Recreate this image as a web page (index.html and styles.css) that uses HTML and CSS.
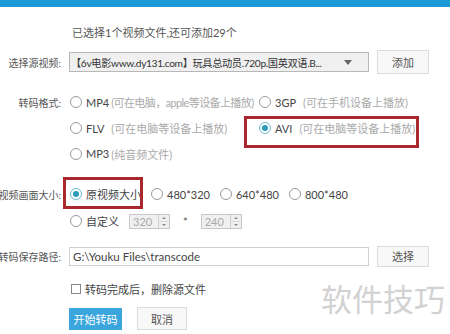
FILE: index.html
```html
<!DOCTYPE html>
<html>
<head>
    <title>视频转码</title>
    <link rel="stylesheet" href="styles.css">
</head>
<body>
    <div class="topbar"></div>

    <div class="info">已选择1个视频文件,还可添加29个</div>

    <div class="row row-source">
        <span class="label">选择源视频:</span>
        <div class="select">
            <span class="select-text">【6v电影www.dy131.com】玩具总动员.720p.国英双语.B...</span>
            <span class="arrow"></span>
        </div>
        <button class="btn btn-add">添加</button>
    </div>

    <div class="row-format">
        <span class="label">转码格式:</span>
        <div class="format-grid">
            <span class="opt"><span class="radio"></span><span class="name">MP4</span><span class="hint hint-tight">(可在电脑，apple等设备上播放)</span></span>
            <span class="opt"><span class="radio"></span><span class="name">3GP</span><span class="hint hint-wide">(可在手机设备上播放)</span></span>
            <span class="opt"><span class="radio"></span><span class="name">FLV</span><span class="hint hint-wide">(可在电脑等设备上播放)</span></span>
            <span class="opt mark mark-avi"><span class="radio on"></span><span class="name">AVI</span><span class="hint hint-wide">(可在电脑等设备上播放)</span></span>
            <span class="opt"><span class="radio"></span><span class="name">MP3</span><span class="hint">(纯音频文件)</span></span>
        </div>
    </div>

    <div class="row row-size">
        <span class="label">视频画面大小:</span>
        <span class="opt mark mark-size"><span class="radio on"></span><span class="name">原视频大小</span></span>
        <span class="opt"><span class="radio"></span><span class="name">480*320</span></span>
        <span class="opt"><span class="radio"></span><span class="name">640*480</span></span>
        <span class="opt"><span class="radio"></span><span class="name">800*480</span></span>
    </div>

    <div class="row row-custom indent">
        <span class="opt"><span class="radio"></span><span class="name">自定义</span></span>
        <span class="num"><span class="num-value">320</span><span class="spin"><i class="up"></i><i class="down"></i></span></span>
        <span class="times">*</span>
        <span class="num"><span class="num-value">240</span><span class="spin"><i class="up"></i><i class="down"></i></span></span>
    </div>

    <div class="row row-path">
        <span class="label">转码保存路径:</span>
        <div class="path-input">G:\Youku Files\transcode</div>
        <button class="btn btn-choose">选择</button>
    </div>

    <div class="row row-check indent">
        <span class="checkbox"></span>
        <span class="check-text">转码完成后，删除源文件</span>
    </div>

    <div class="row row-actions indent">
        <button class="btn btn-primary">开始转码</button>
        <button class="btn btn-cancel">取消</button>
    </div>

    <div class="watermark">软件技巧</div>
</body>
</html>
```

FILE: styles.css
```css
body {
    margin: 0;
    width: 450px;
    height: 334px;
    overflow: hidden;
    position: relative;
    background-color: #fff;
    font-family: Lato, "Noto Sans CJK SC", sans-serif;
    font-size: 11px;
    color: #444;
}

.topbar {
    height: 7px;
    background-color: #1b9ad7;
}

.info {
    margin-top: 16px;
    height: 20px;
    line-height: 20px;
    padding-left: 72px;
    color: #555;
}

.row {
    display: flex;
    align-items: center;
}

.indent {
    padding-left: 69px;
}

.label {
    width: 61px;
    margin-right: 8px;
    flex-shrink: 0;
    display: flex;
    justify-content: flex-end;
    white-space: nowrap;
    font-size: 10px;
    color: #555;
}

/* source select */
.row-source {
    margin-top: 7px;
    height: 24px;
}

.select {
    width: 300px;
    height: 20px;
    box-sizing: border-box;
    border: 1px solid #b8b8b8;
    background-color: #f0f0f0;
    display: flex;
    align-items: center;
    padding-left: 1px;
}

.select-text {
    flex: 1;
    color: #333;
    white-space: nowrap;
    overflow: hidden;
    font-size: 10.2px;
    letter-spacing: -0.35px;
}

.arrow {
    width: 0;
    height: 0;
    border-left: 4px solid transparent;
    border-right: 4px solid transparent;
    border-top: 5px solid #666;
    margin: 0 16px 0 3px;
}

.btn {
    font-family: inherit;
    font-size: 11px;
    color: #555;
    background-color: #f8f8f8;
    border: 1px solid #dcdcdc;
    padding: 0;
    cursor: pointer;
}

.btn-add {
    margin-left: 8px;
    width: 52px;
    height: 24px;
}

/* formats */
.row-format {
    margin-top: 15px;
    display: flex;
    align-items: flex-start;
}

.row-format .label {
    height: 26px;
    align-items: center;
}

.format-grid {
    display: grid;
    grid-template-columns: 189px auto;
    grid-template-rows: 26px 26px 25px;
}

.format-grid .opt {
    justify-self: start;
}

.opt {
    display: flex;
    align-items: center;
    position: relative;
    white-space: nowrap;
}

.radio {
    width: 12px;
    height: 12px;
    box-sizing: border-box;
    border: 1px solid #9a9a9a;
    border-radius: 50%;
    margin-left: 1px;
    margin-right: 4px;
    flex-shrink: 0;
    display: flex;
    align-items: center;
    justify-content: center;
}

.radio.on {
    border-color: #6cb8cc;
}

.radio.on::after {
    content: "";
    width: 6px;
    height: 6px;
    border-radius: 50%;
    background-color: #2b9db6;
}

.name {
    color: #444;
}

.hint {
    color: #aaa;
    margin-left: 2px;
}

.hint-tight {
    letter-spacing: -0.6px;
}

.hint-wide {
    margin-left: 7px;
}

/* red annotation boxes */
.mark::after {
    content: "";
    position: absolute;
    border: 3px solid #a8282e;
}

.mark-avi::after {
    top: 1px;
    bottom: -7px;
    left: -14px;
    right: -4px;
}

.mark-size::after {
    top: -4px;
    bottom: -2px;
    left: -6px;
    right: -2px;
}

/* size */
.row-size {
    margin-top: 15px;
    height: 26px;
}

.row-size .opt {
    align-self: stretch;
    margin-right: 9px;
}

.row-custom {
    margin-top: 1px;
    height: 26px;
}

.num {
    width: 41px;
    height: 15px;
    box-sizing: border-box;
    border: 1px solid #c8c8c8;
    background-color: #f0f0f0;
    display: flex;
    margin-left: 10px;
}

.num-value {
    flex: 1;
    color: #aaa;
    line-height: 13px;
    padding-left: 3px;
}

.spin {
    width: 10px;
    border-left: 1px solid #d0d0d0;
    display: flex;
    flex-direction: column;
}

.spin i {
    flex: 1;
    display: flex;
    align-items: center;
    justify-content: center;
}

.spin .up {
    border-bottom: 1px solid #d8d8d8;
}

.spin .up::after,
.spin .down::after {
    content: "";
    border-left: 2px solid transparent;
    border-right: 2px solid transparent;
}

.spin .up::after {
    border-bottom: 2px solid #888;
}

.spin .down::after {
    border-top: 2px solid #888;
}

.times {
    margin-left: 13px;
    margin-right: 3px;
    color: #555;
}

/* path */
.row-path {
    margin-top: 10px;
    height: 24px;
}

.path-input {
    width: 300px;
    height: 19px;
    box-sizing: border-box;
    border: 1px solid #d0d0d0;
    padding-left: 3px;
    font-size: 11.5px;
    line-height: 17px;
    color: #444;
}

.btn-choose {
    margin-left: 8px;
    width: 52px;
    height: 21px;
}

/* checkbox */
.row-check {
    margin-top: 10px;
    height: 22px;
}

.checkbox {
    width: 10px;
    height: 10px;
    box-sizing: border-box;
    border: 1px solid #888;
    margin-left: 2px;
    margin-right: 4px;
}

.check-text {
    color: #444;
}

/* actions */
.row-actions {
    margin-top: 7px;
    height: 23px;
}

.btn-primary {
    width: 53px;
    height: 22px;
    border: none;
    background-color: #3ba6dd;
    color: #fff;
}

.btn-cancel {
    margin-left: 15px;
    width: 50px;
    height: 23px;
}

.watermark {
    position: absolute;
    left: 321px;
    top: 284px;
    font-size: 31px;
    line-height: 1;
    color: #d2d2d2;
}
```
